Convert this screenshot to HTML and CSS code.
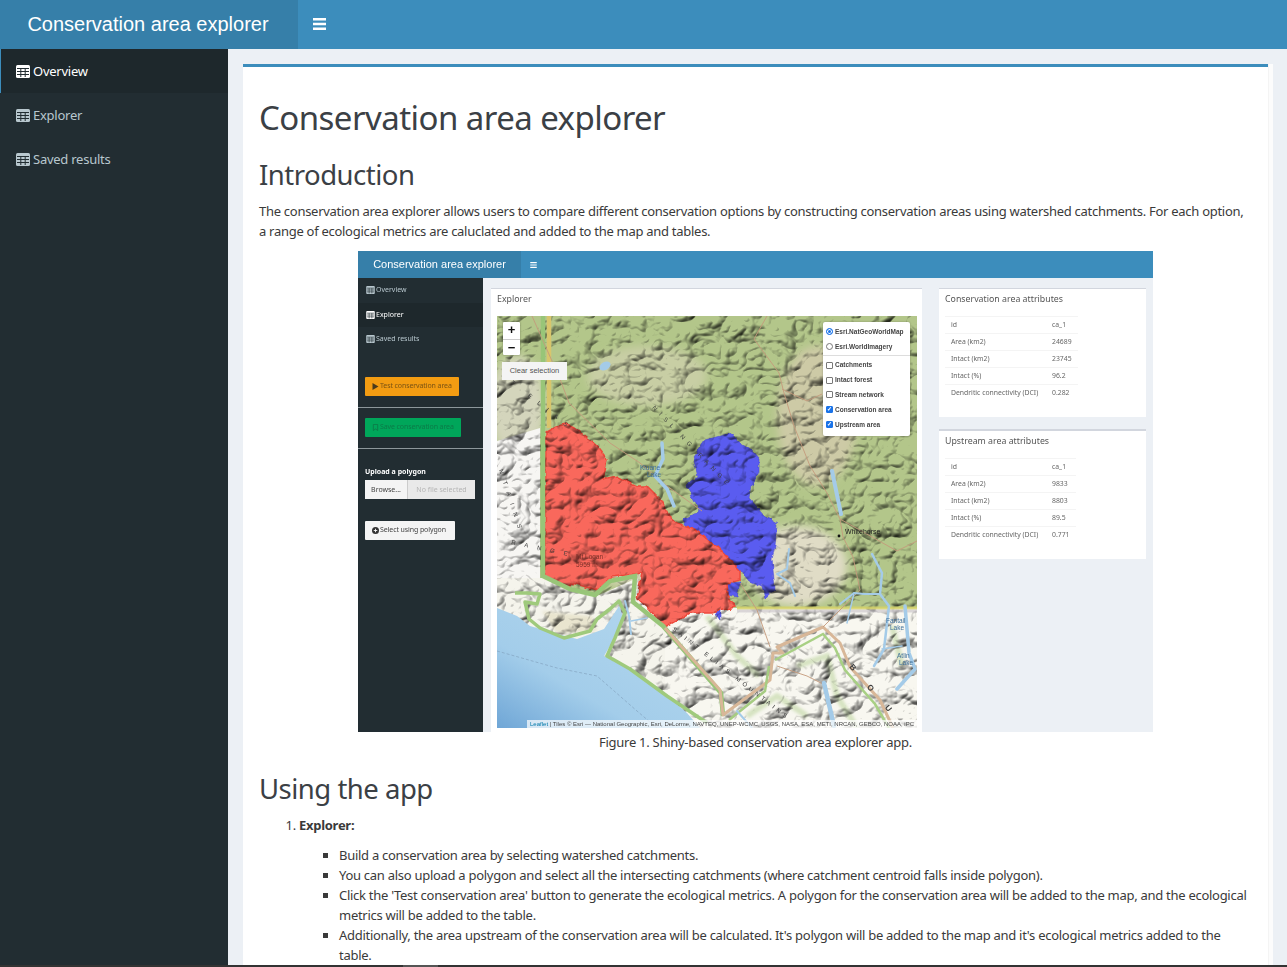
FILE: index.html
```html
<!DOCTYPE html>
<html lang="en">
<head>
  <meta charset="UTF-8">
  <title>Conservation area explorer</title>
  <link rel="stylesheet" href="styles.css">
</head>
<body>

  <svg class="defs" width="0" height="0">
    <symbol id="icon-table" viewBox="0 0 14 13">
      <rect x="0" y="0" width="14" height="13" rx="1.5" fill="currentColor"/>
      <path d="M1 3.5H13M1 6.5H13M1 9.5H13M4.8 3.5V12M9.2 3.5V12" stroke="#222d32" stroke-width="1" fill="none"/>
    </symbol>
  </svg>

  <div class="page">
    <header class="topbar">
      <div class="logo">Conservation area explorer</div>
      <div class="toggle">
        <svg width="13" height="12" viewBox="0 0 13 12"><path d="M0 0H13V2.4H0ZM0 4.8H13V7.2H0ZM0 9.6H13V12H0Z" fill="#fff"/></svg>
      </div>
    </header>

    <div class="wrapper">
      <aside class="sidebar">
        <a class="nav-item active"><svg class="nav-icon"><use href="#icon-table"/></svg>Overview</a>
        <a class="nav-item"><svg class="nav-icon"><use href="#icon-table"/></svg>Explorer</a>
        <a class="nav-item"><svg class="nav-icon"><use href="#icon-table"/></svg>Saved results</a>
      </aside>

      <main class="content">
        <section class="box">
          <div class="box-body">
            <h1>Conservation area explorer</h1>
            <h2>Introduction</h2>
            <p>The conservation area explorer allows users to compare different conservation options by constructing conservation areas using watershed catchments. For each option, a range of ecological metrics are caluclated and added to the map and tables.</p>

            <!-- the figure: screenshot of the explorer tab, rebuilt small -->
            <div class="figure">
              <div class="mini-top">
                <div class="mini-logo">Conservation area explorer</div>
                <svg class="mini-burger" width="7" height="6" viewBox="0 0 13 12"><path d="M0 0H13V2.4H0ZM0 4.8H13V7.2H0ZM0 9.6H13V12H0Z" fill="#fff"/></svg>
              </div>
              <div class="mini-body">
                <div class="mini-side">
                  <div class="mini-nav"><svg class="mini-icon"><use href="#icon-table"/></svg>Overview</div>
                  <div class="mini-nav on"><svg class="mini-icon"><use href="#icon-table"/></svg>Explorer</div>
                  <div class="mini-nav"><svg class="mini-icon"><use href="#icon-table"/></svg>Saved results</div>
                  <div class="mini-btn orange"><svg class="mini-glyph" viewBox="0 0 6 7"><path d="M0 0L6 3.5L0 7Z" fill="#4a3a1c"/></svg>Test conservation area</div>
                  <div class="mini-rule"></div>
                  <div class="mini-btn green"><svg class="mini-glyph" viewBox="0 0 6 8"><path d="M.5 .5H5.5V7.5L3 5.6L.5 7.5Z" fill="none" stroke="#0b7a48"/></svg>Save conservation area</div>
                  <div class="mini-rule second"></div>
                  <div class="mini-upload">Upload a polygon</div>
                  <div class="mini-file"><span class="mini-browse">Browse...</span><span class="mini-none">No file selected</span></div>
                  <div class="mini-btn plain"><svg class="mini-glyph" viewBox="0 0 8 8"><circle cx="4" cy="4" r="4" fill="#333"/><path d="M4 2V6M2 4H6" stroke="#fff"/></svg>Select using polygon</div>
                </div>

                <div class="mini-main">
                  <div class="mini-box map-box">
                    <div class="mini-title">Explorer</div>
                    <div class="map">
                      <svg class="map-svg" viewBox="0 0 420 412" width="420" height="412">
                        <defs>
                          <filter id="relief" x="0" y="0" width="100%" height="100%" color-interpolation-filters="sRGB">
                            <feTurbulence type="turbulence" baseFrequency="0.03 0.036" numOctaves="3" seed="23"/>
                            <feDiffuseLighting surfaceScale="5" diffuseConstant="1.24" lighting-color="#ffffff">
                              <feDistantLight azimuth="235" elevation="55"/>
                            </feDiffuseLighting>
                          </filter>
                          <filter id="rough" x="-5%" y="-5%" width="110%" height="110%" color-interpolation-filters="sRGB">
                            <feTurbulence type="fractalNoise" baseFrequency="0.14" numOctaves="2" seed="4" result="wobble"/>
                            <feDisplacementMap in="SourceGraphic" in2="wobble" scale="5" xChannelSelector="R" yChannelSelector="G"/>
                          </filter>
                          <filter id="soft" x="-20%" y="-20%" width="140%" height="140%"><feGaussianBlur stdDeviation="4"/></filter>
                          <filter id="softer" x="-20%" y="-20%" width="140%" height="140%"><feGaussianBlur stdDeviation="1.5"/></filter>
                          <linearGradient id="sea" x1="0" y1="1" x2="1" y2="0">
                            <stop offset="0" stop-color="#6fa6d6"/>
                            <stop offset="0.35" stop-color="#a3cdea"/>
                            <stop offset="1" stop-color="#b5d8ee"/>
                          </linearGradient>
                        </defs>

                        <!-- land colours -->
                        <rect width="420" height="412" fill="#b3c68a"/>
                        <g filter="url(#soft)">
                          <ellipse cx="150" cy="60" rx="60" ry="30" fill="#c8cea4"/>
                          <ellipse cx="320" cy="100" rx="40" ry="70" fill="#cdcaa6"/>
                          <ellipse cx="300" cy="250" rx="50" ry="40" fill="#e0dcc6"/>
                          <ellipse cx="20" cy="90" rx="28" ry="50" fill="#d4d5bc"/>
                          <ellipse cx="130" cy="230" rx="40" ry="40" fill="#d4d3b6"/>
                        </g>
                        <path d="M0 125L43 112V262L50 300L0 300Z" fill="#f7f6f3"/>
                        <path d="M0 262H48L100 280L140 262L168 311L230 412H0Z" fill="#f5f4ec"/>
                        <path d="M168 292H420V412H168Z" fill="#f8f7f0"/>
                        <g fill="none" stroke="#c0d6a2" stroke-width="6" opacity=".6" filter="url(#softer)">
                          <path d="M210 300L240 340L262 360"/>
                          <path d="M300 350L330 340L340 380L360 412"/>
                          <path d="M250 400L280 380L310 400"/>
                          <path d="M395 310L405 350"/>
                        </g>
                        <path d="M45 295L95 300L100 315L60 318Z" fill="#e9e5cf" filter="url(#softer)"/>

                        <!-- polygons from the app, under the hillshade so the relief shows through -->
                        <g filter="url(#rough)">
                          <path class="area-blue" d="M234 117L208 124L196 141L201 161L189 169L203 194L186 204L194 217L220 231L243 254L252 265L265 270L268 282L278 273L275 243L278 230L280 208L270 202L253 183L255 170L262 157L262 143L255 135L243 127Z"/>
                          <path class="area-blue" d="M230 267L243 266L240 281L231 279ZM218 294L223 294L223 304L220 300Z"/>
                          <path class="area-red" d="M49 116L60 110L70 108L78 112L90 122L100 130L110 143L108 155L106 163L120 160L140 170L150 170L165 185L172 200L180 207L196 212L220 231L243 254L243 264L230 267L231 279L238 291L226 294L215 297L193 297L168 311L150 291L140 282L145 257L116 261L100 274L75 267L73 271L48 262Z"/>
                        </g>

                        <!-- hillshade -->
                        <rect class="hillshade" width="420" height="412" filter="url(#relief)"/>

                        <!-- sea and coast -->
                        <path d="M0 292L20 300L33 310L57 317L80 323L107 313L122 290L126 300L117 323L107 340L133 353L167 377L190 397L203 412H0Z" fill="url(#sea)"/>
                        <path d="M0 335L60 352L100 360L140 395L160 412" fill="none" stroke="#7d9cb8" stroke-width=".6" stroke-dasharray="3 2"/>
                        <path d="M18 277L30 277L43 278L40 288L28 286L32 303L43 312L67 322L93 315L100 303L113 293L122 285L128 297L118 322L110 340L133 353L170 380L210 407" fill="none" stroke="#9fca7c" stroke-width="3.5" stroke-linejoin="round"/>

                        <!-- park boundaries -->
                        <path d="M46 0V260L73 273L98 279L113 265L138 260L136 286L166 310L224 377L226 400" fill="none" stroke="#98c578" stroke-width="4.5"/>
                        <path d="M52 0V112" stroke="#d8c56c" stroke-width="4.5"/>
                        <path d="M168 312L223 374L226 399L273 364L276 337L286 337L280 331L326 311L343 327L353 351L383 384L396 412" fill="none" stroke="#d8b798" stroke-width="3" stroke-linejoin="round"/>
                        <path d="M278 344L326 318L338 332L348 354L378 388L392 412" fill="none" stroke="#a8d084" stroke-width="2.5"/>
                        <path d="M232 404L268 375L272 350" fill="none" stroke="#a6cc82" stroke-width="2.5"/>
                        <path d="M240 292H420" stroke="#d6d36a" stroke-width="3" opacity=".85"/>
                        <path d="M240 295H420" stroke="#bdb7c0" stroke-width="3" opacity=".5"/>

                        <!-- roads -->
                        <g fill="none" stroke="#c49a7c" stroke-width=".9">
                          <path d="M35 0L63 63L72 87L113 127L143 147L170 170L205 195"/>
                          <path d="M270 0L257 23L282 57L287 77L297 110L313 150L330 177L343 203L346 221L356 241L363 274L326 311"/>
                          <path d="M285 73L310 85L325 78"/>
                          <path d="M243 267L260 294L273 331"/>
                          <path d="M343 203L400 235L420 225"/>
                          <path d="M280 350L310 360L330 370"/>
                        </g>

                        <!-- lakes and rivers -->
                        <g fill="none" stroke="#a4cbe8" stroke-linecap="round" stroke-linejoin="round">
                          <path d="M165 127L166 143L158 160L170 173L177 190" stroke-width="3.5"/>
                          <path d="M335 155L344 198" stroke-width="4"/>
                          <path d="M292 233L290 253L280 258L293 267L298 280" stroke-width="2"/>
                          <path d="M375 238L385 257L383 278L392 290L387 333L377 350" stroke-width="2.5"/>
                          <path d="M383 278L367 278L357 277L343 288" stroke-width="2"/>
                          <path d="M357 277L350 307" stroke-width="1.5"/>
                          <path d="M408 290L412 337L418 353L400 373" stroke-width="3.5"/>
                          <path d="M385 333L405 330" stroke-width="1.5"/>
                          <path d="M327 367L337 410" stroke-width="4.5"/>
                          <path d="M240 395L255 412" stroke-width="2"/>
                          <path d="M128 285L132 300L134 318" stroke-width="2"/>
                          <path d="M134 305L150 302" stroke-width="1.5"/>
                        </g>
                        <ellipse cx="108" cy="50" rx="6" ry="4" fill="#a4cbe8" transform="rotate(-30 108 50)"/>

                        <!-- map labels -->
                        <g class="map-label">
                          <text x="143" y="154" fill="#3d6f99">Kluane</text>
                          <text x="150" y="161" fill="#3d6f99">Lake</text>
                          <text x="79" y="243" fill="#7a3028">Mt Logan</text>
                          <text x="79" y="251" fill="#7a3028">5959 m</text>
                          <text x="348" y="218" fill="#222" class="town">Whitehorse</text>
                          <text x="389" y="307" fill="#3d6f99">Fantail</text>
                          <text x="393" y="314" fill="#3d6f99">Lake</text>
                          <text x="400" y="342" fill="#3d6f99">Atlin</text>
                          <text x="402" y="349" fill="#3d6f99">Lake</text>
                        </g>
                        <circle cx="342" cy="220" r="1.4" fill="#111"/>
                        <g class="map-caps">
                          <text transform="translate(4 60) rotate(38)" letter-spacing="8">ST ELIAS</text>
                          <text transform="translate(155 92) rotate(46)" letter-spacing="5">NISLING RANGE</text>
                          <text transform="translate(2 154) rotate(72)" letter-spacing="8">NTAINS</text>
                          <text transform="translate(14 228) rotate(12)" letter-spacing="9">RANGE</text>
                          <text transform="translate(175 314) rotate(38)" letter-spacing="3.5">SAINT ELIAS MOUNTAINS</text>
                          <text transform="translate(352 351) rotate(49)" letter-spacing="21" class="map-big">BOU</text>
                        </g>
                      </svg>

                      <div class="zoom-ctl"><span>+</span><span>&minus;</span></div>
                      <div class="clear-btn">Clear selection</div>

                      <div class="layers">
                        <div class="layer"><span class="radio on"></span>Esri.NatGeoWorldMap</div>
                        <div class="layer"><span class="radio"></span>Esri.WorldImagery</div>
                        <div class="layers-sep"></div>
                        <div class="layer thin"><span class="check"></span>Catchments</div>
                        <div class="layer thin"><span class="check"></span>Intact forest</div>
                        <div class="layer thin"><span class="check"></span>Stream network</div>
                        <div class="layer thin"><span class="check on">&#10003;</span>Conservation area</div>
                        <div class="layer thin"><span class="check on">&#10003;</span>Upstream area</div>
                      </div>

                      <div class="attribution"><span class="leaflet">Leaflet</span> | Tiles &copy; Esri &mdash; National Geographic, Esri, DeLorme, NAVTEQ, UNEP-WCMC, USGS, NASA, ESA, METI, NRCAN, GEBCO, NOAA, iPC</div>
                    </div>
                  </div>

                  <div class="mini-col">
                    <div class="mini-box attr-box">
                      <div class="mini-title">Conservation area attributes</div>
                      <table class="attr wide">
                        <tr><td>id</td><td>ca_1</td></tr>
                        <tr><td>Area (km2)</td><td>24689</td></tr>
                        <tr><td>Intact (km2)</td><td>23745</td></tr>
                        <tr><td>Intact (%)</td><td>96.2</td></tr>
                        <tr><td>Dendritic connectivity (DCI)</td><td>0.282</td></tr>
                      </table>
                    </div>
                    <div class="mini-box attr-box">
                      <div class="mini-title">Upstream area attributes</div>
                      <table class="attr">
                        <tr><td>id</td><td>ca_1</td></tr>
                        <tr><td>Area (km2)</td><td>9833</td></tr>
                        <tr><td>Intact (km2)</td><td>8803</td></tr>
                        <tr><td>Intact (%)</td><td>89.5</td></tr>
                        <tr><td>Dendritic connectivity (DCI)</td><td>0.771</td></tr>
                      </table>
                    </div>
                  </div>
                </div>
              </div>
            </div>
            <p class="caption">Figure 1. Shiny-based conservation area explorer app.</p>

            <h2>Using the app</h2>
            <ol>
              <li>
                <p><strong>Explorer:</strong></p>
                <ul>
                  <li>Build a conservation area by selecting watershed catchments.</li>
                  <li>You can also upload a polygon and select all the intersecting catchments (where catchment centroid falls inside polygon).</li>
                  <li>Click the 'Test conservation area' button to generate the ecological metrics. A polygon for the conservation area will be added to the map, and the ecological metrics will be added to the table.</li>
                  <li>Additionally, the area upstream of the conservation area will be calculated. It's polygon will be added to the map and it's ecological metrics added to the table.</li>
                </ul>
              </li>
            </ol>
          </div>
          <div class="box-gutter"></div>
        </section>
      </main>
    </div>

    <div class="taskbar"><span class="taskbar-thumb"></span></div>
  </div>

</body>
</html>
```

FILE: styles.css
```css
* {
  box-sizing: border-box;
}

body {
  margin: 0;
  font-family: "Noto Sans", "Open Sans", sans-serif;
  font-size: 13px;
  letter-spacing: -0.28px;
  line-height: 20px;
  color: #3a3a3a;
  background: #ecf0f5;
}

.defs {
  position: absolute;
}

.page {
  display: flex;
  flex-direction: column;
  height: 967px;
  overflow: hidden;
}

/* top bar */
.topbar {
  display: flex;
  height: 49px;
  flex-shrink: 0;
  background: #3c8dbc;
  color: #fff;
}

.logo {
  width: 298px;
  padding-right: 2px;
  background: #367fa9;
  font-family: "Liberation Sans", Arial, sans-serif;
  font-size: 20px;
  letter-spacing: 0;
  line-height: 49px;
  text-align: center;
}

.toggle {
  display: flex;
  align-items: center;
  padding-left: 15px;
  padding-bottom: 1px;
}

.wrapper {
  display: flex;
  flex: 1;
  min-height: 0;
}

/* sidebar */
.sidebar {
  width: 228px;
  flex-shrink: 0;
  background: #222d32;
}

.nav-item {
  display: flex;
  align-items: center;
  height: 44px;
  padding-left: 16px;
  color: #b8c7ce;
  font-size: 13px;
  letter-spacing: -0.25px;
}

.nav-item.active {
  background: #1e282c;
  color: #fff;
  border-left: 1px solid #3c8dbc;
  padding-left: 15px;
}

.nav-icon {
  width: 14px;
  height: 13px;
  margin-right: 3px;
}

/* content */
.content {
  flex: 1;
  padding: 15px 14px 0 15px;
  min-width: 0;
}

.box {
  display: flex;
  height: 100%;
  background: #fff;
}

.box-body {
  flex: 1;
  min-width: 0;
  border-top: 3px solid #3c8dbc;
  padding: 11px 16px 0;
  overflow: hidden;
}

.box-gutter {
  width: 5px;
  background: #fcfcfc;
  border-left: 1px solid #f4f4f4;
}

h1,
h2 {
  font-weight: 400;
  color: #3b4045;
  margin: 20px 0 10px;
}

h1 {
  font-size: 33px;
  line-height: 40px;
  letter-spacing: -0.55px;
}

h2 {
  font-size: 27.5px;
  line-height: 33px;
  letter-spacing: -0.5px;
}

p {
  margin: 0 0 10px;
}

.caption {
  text-align: center;
}

ol {
  margin: 0 0 10px;
  padding-left: 40px;
}

ul {
  margin: 0;
  padding-left: 40px;
  list-style: square;
}

/* figure */
.figure {
  width: 795px;
  height: 481px;
  margin: 0 auto;
  display: flex;
  flex-direction: column;
  background: #ecf0f5;
  filter: blur(0.35px);
  font-family: "Noto Sans", sans-serif;
  font-size: 7px;
  letter-spacing: 0;
  line-height: 10px;
  color: #555;
}

.mini-top {
  display: flex;
  align-items: center;
  height: 27px;
  flex-shrink: 0;
  background: #3c8dbc;
}

.mini-logo {
  width: 163px;
  height: 27px;
  background: #367fa9;
  color: #fff;
  font-family: "Liberation Sans", sans-serif;
  font-size: 11px;
  line-height: 27px;
  text-align: center;
}

.mini-burger {
  margin-left: 9px;
}

.mini-body {
  display: flex;
  flex: 1;
  min-height: 0;
}

.mini-side {
  width: 125px;
  flex-shrink: 0;
  background: #222d32;
  color: #b8c7ce;
}

.mini-nav {
  display: flex;
  align-items: center;
  height: 24.5px;
  padding-left: 8px;
}

.mini-nav.on {
  background: #1e282c;
  color: #fff;
}

.mini-icon {
  width: 9px;
  height: 8px;
  margin-right: 1px;
}

.mini-btn {
  display: flex;
  align-items: center;
  height: 19px;
  margin-left: 7px;
  border-radius: 1px;
  padding-left: 7px;
  letter-spacing: -0.1px;
  white-space: nowrap;
}

.mini-glyph {
  width: 7px;
  height: 7px;
  margin-right: 1px;
  flex-shrink: 0;
}

.orange {
  width: 94px;
  margin-top: 25px;
  background: #f39c12;
  color: #7a5314;
}

.green {
  width: 96px;
  background: #00a65a;
  color: #0b7a48;
}

.plain {
  width: 90px;
  margin-top: 22px;
  background: #f4f4f4;
  color: #444;
}

.mini-rule {
  height: 1px;
  margin: 11px 0 10px;
  background: #8d979b;
}

.mini-rule.second {
  margin-bottom: 18px;
}

.mini-upload {
  margin-left: 7px;
  color: #fff;
  font-weight: 700;
  height: 13px;
}

.mini-file {
  display: flex;
  width: 110px;
  height: 19px;
  margin-left: 7px;
  line-height: 19px;
}

.mini-browse {
  width: 43px;
  background: #f4f4f4;
  border-right: 1px solid #ccc;
  color: #444;
  text-align: center;
}

.mini-none {
  flex: 1;
  background: #e9e9e9;
  color: #b5b5b5;
  text-align: center;
}

.mini-main {
  display: flex;
  flex: 1;
  padding: 10px 7px 0 8px;
  gap: 17px;
  min-width: 0;
}

.mini-box {
  background: #fff;
  border-top: 1px solid #d2d6de;
}

.map-box {
  width: 431px;
  height: 444px;
  padding: 0 5px 0 6px;
}

.mini-title {
  font-size: 8.8px;
  line-height: 20px;
  color: #555;
}

.map-box .mini-title {
  height: 27px;
}

.mini-col {
  display: flex;
  flex-direction: column;
  gap: 12px;
  width: 207px;
}

.attr-box {
  height: 129px;
  padding: 0 6px;
}

.attr-box + .attr-box {
  height: 130px;
  border-top-width: 2px;
}

.attr {
  border-collapse: collapse;
  margin-top: 7px;
  font-size: 6.85px;
  line-height: 16px;
  color: #666;
}

.attr td {
  padding: 0 6px;
  border-top: 1px solid #f4f4f4;
}

.attr td:first-child {
  width: 101px;
  white-space: nowrap;
}

.attr td:last-child {
  width: 30px;
  padding-right: 0;
}

.attr.wide td:last-child {
  width: 32px;
}

/* map */
.map {
  position: relative;
  width: 420px;
  height: 412px;
  overflow: hidden;
  background: #b4c48c;
}

.map-svg {
  display: block;
}

.hillshade {
  mix-blend-mode: multiply;
}

.area-red {
  fill: #f9685c;
  stroke: #ee4a3c;
  stroke-width: 1.5;
}

.area-blue {
  fill: #5a5cf0;
  stroke: #4a4cd8;
  stroke-width: 0.6;
}

.map-label text {
  font-family: "Liberation Sans", sans-serif;
  font-size: 6.5px;
}

.map-label .town {
  font-size: 7px;
}

.map-caps text {
  font-family: "Liberation Sans", sans-serif;
  font-size: 6px;
  fill: #3e3e3e;
}

.map-caps .map-big {
  font-size: 8px;
  font-weight: 700;
}

.zoom-ctl {
  position: absolute;
  left: 6px;
  top: 6px;
  display: flex;
  flex-direction: column;
  width: 17px;
  background: #fff;
  border-radius: 1px;
  box-shadow: 0 0 2px rgba(0, 0, 0, 0.4);
}

.zoom-ctl span {
  height: 16.5px;
  font-family: "Liberation Sans", sans-serif;
  font-size: 13px;
  font-weight: 700;
  line-height: 16px;
  text-align: center;
  color: #111;
}

.zoom-ctl span + span {
  border-top: 1px solid #ccc;
}

.clear-btn {
  position: absolute;
  left: 5px;
  top: 46px;
  width: 65px;
  height: 18px;
  background: #f4f4f4;
  font-family: "Liberation Sans", sans-serif;
  font-size: 7.5px;
  line-height: 18px;
  text-align: center;
  color: #555;
}

.layers {
  position: absolute;
  left: 326px;
  top: 6px;
  width: 87px;
  height: 114px;
  padding-top: 2px;
  background: #fff;
  border-radius: 2px;
  box-shadow: 0 0 2px rgba(0, 0, 0, 0.3);
  font-family: "Liberation Sans", sans-serif;
  font-size: 6.5px;
  font-weight: 700;
  color: #444;
}

.layer {
  display: flex;
  align-items: center;
  height: 15px;
  padding-left: 3px;
  gap: 2px;
  white-space: nowrap;
}

.layer.thin {
  height: 14.8px;
}

.layers-sep {
  height: 1px;
  margin: 1px 0 2px;
  background: #ddd;
}

.radio,
.check {
  display: inline-block;
  width: 7px;
  height: 7px;
  border: 1px solid #777;
  background: #fff;
  flex-shrink: 0;
}

.radio {
  border-radius: 50%;
}

.radio.on {
  background: #1a73e8;
  border-color: #1a73e8;
  box-shadow: inset 0 0 0 1px #fff;
}

.check {
  border-radius: 1px;
  font-size: 6px;
  line-height: 5px;
  text-align: center;
}

.check.on {
  background: #1a73e8;
  border-color: #1a73e8;
  color: #fff;
}

.attribution {
  position: absolute;
  right: 0;
  bottom: 0;
  height: 8px;
  padding: 0 3px;
  background: rgba(255, 255, 255, 0.7);
  font-family: "Liberation Sans", sans-serif;
  font-size: 6px;
  line-height: 8px;
  color: #444;
  white-space: nowrap;
}

.leaflet {
  color: #0078a8;
}

/* strip at the very bottom of the window */
.taskbar {
  height: 2px;
  flex-shrink: 0;
  background: #333;
  padding-left: 403px;
}

.taskbar-thumb {
  display: block;
  width: 35px;
  height: 2px;
  background: #555;
}
```
